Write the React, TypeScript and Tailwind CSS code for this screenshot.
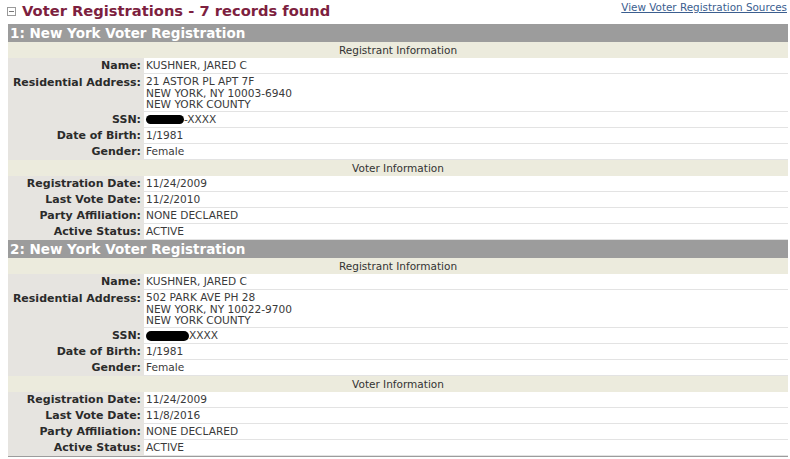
import React from 'react';

type Row = { label: string; value: React.ReactNode; tall?: boolean };

interface Registration {
  title: string;
  registrant: Row[];
  voter: Row[];
}

const font = { fontFamily: '"DejaVu Sans", Verdana, sans-serif' };

function Redacted({ width, dash }: { width: number; dash: boolean }) {
  return (
    <span className="inline-flex items-center">
      {width === 38 ? (
        <span className="inline-block h-[9px] w-[38px] rounded-full bg-black" />
      ) : (
        <span className="inline-block h-[10px] w-[43px] rounded-full bg-black" />
      )}
      <span>{dash ? '-XXXX' : 'XXXX'}</span>
    </span>
  );
}

const registrations: Registration[] = [
  {
    title: '1: New York Voter Registration',
    registrant: [
      { label: 'Name:', value: 'KUSHNER, JARED C' },
      {
        label: 'Residential Address:',
        value: ['21 ASTOR PL APT 7F', 'NEW YORK, NY 10003-6940', 'NEW YORK COUNTY'],
        tall: true,
      },
      { label: 'SSN:', value: <Redacted width={38} dash /> },
      { label: 'Date of Birth:', value: '1/1981' },
      { label: 'Gender:', value: 'Female' },
    ],
    voter: [
      { label: 'Registration Date:', value: '11/24/2009' },
      { label: 'Last Vote Date:', value: '11/2/2010' },
      { label: 'Party Affiliation:', value: 'NONE DECLARED' },
      { label: 'Active Status:', value: 'ACTIVE' },
    ],
  },
  {
    title: '2: New York Voter Registration',
    registrant: [
      { label: 'Name:', value: 'KUSHNER, JARED C' },
      {
        label: 'Residential Address:',
        value: ['502 PARK AVE PH 28', 'NEW YORK, NY 10022-9700', 'NEW YORK COUNTY'],
        tall: true,
      },
      { label: 'SSN:', value: <Redacted width={43} dash={false} /> },
      { label: 'Date of Birth:', value: '1/1981' },
      { label: 'Gender:', value: 'Female' },
    ],
    voter: [
      { label: 'Registration Date:', value: '11/24/2009' },
      { label: 'Last Vote Date:', value: '11/8/2016' },
      { label: 'Party Affiliation:', value: 'NONE DECLARED' },
      { label: 'Active Status:', value: 'ACTIVE' },
    ],
  },
];

function DataRow({ row }: { row: Row }) {
  if (row.tall) {
    const lines = row.value as string[];
    return (
      <div className="flex h-[38px]">
        <div className="w-[136px] shrink-0 bg-[#e6e4e0] pr-[3px] pt-[1px] text-right text-[11px] font-bold leading-[16px] text-[#2b2b2b]">
          {row.label}
        </div>
        <div className="flex-1 border-b border-[#e3e3e3] bg-white pl-[2px] pt-[2px] text-[10.6px] leading-[11.5px] text-[#3a3a3a]">
          {lines.map((l) => (
            <div key={l}>{l}</div>
          ))}
        </div>
      </div>
    );
  }
  return (
    <div className="flex h-[16px]">
      <div className="w-[136px] shrink-0 bg-[#e6e4e0] pr-[3px] text-right text-[11px] font-bold leading-[16px] text-[#2b2b2b]">
        {row.label}
      </div>
      <div className="flex flex-1 items-center border-b border-[#e3e3e3] bg-white pl-[2px] text-[10.6px] leading-[15px] text-[#3a3a3a]">
        {row.value}
      </div>
    </div>
  );
}

function SubHeader({ text }: { text: string }) {
  return (
    <div className="h-[16px] bg-[#ecebdd] text-center text-[10.5px] leading-[16px] text-[#333]">
      {text}
    </div>
  );
}

function Section({ reg }: { reg: Registration }) {
  return (
    <div className="flex flex-col">
      <div className="h-[18px] bg-[#9c9c9c] pl-[2px] text-[13.5px] font-bold leading-[18px] text-white">
        {reg.title}
      </div>
      <SubHeader text="Registrant Information" />
      {reg.registrant.map((r) => (
        <DataRow key={r.label} row={r} />
      ))}
      <SubHeader text="Voter Information" />
      {reg.voter.map((r) => (
        <DataRow key={r.label} row={r} />
      ))}
    </div>
  );
}

export default function App() {
  return (
    <div className="h-[459px] w-[790px] overflow-hidden bg-white" style={font}>
      <div className="flex h-[24px] items-start justify-between pl-[7px] pr-[3px]">
        <div className="flex items-center">
          <span className="mt-[1px] flex h-[9px] w-[9px] items-center justify-center border border-[#9a9a9a] bg-white">
            <span className="h-px w-[5px] bg-[#777]" />
          </span>
          <span className="ml-[6px] text-[14.7px] font-bold leading-[22px] text-[#7d1f40]">
            Voter Registrations - 7 records found
          </span>
        </div>
        <a className="text-[10.4px] leading-[14px] text-[#3b5e8f] underline" href="#">
          View Voter Registration Sources
        </a>
      </div>
      <div className="ml-[8px] w-[780px] border-b border-[#9c9c9c]">
        {registrations.map((reg) => (
          <Section key={reg.title} reg={reg} />
        ))}
      </div>
    </div>
  );
}
